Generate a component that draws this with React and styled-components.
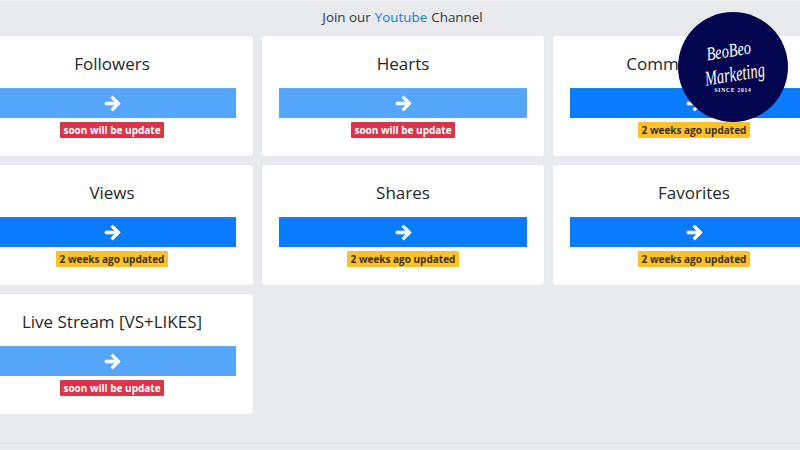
import React from 'react';
import styled, { createGlobalStyle } from 'styled-components';
import { FaArrowRight } from 'react-icons/fa';

const GlobalStyle = createGlobalStyle`
    html, body {
        margin: 0;
        padding: 0;
        background: #e9eaee;
    }
    body {
        font-family: "Open Sans", "Noto Sans", sans-serif;
        color: #212529;
    }
`;

const Page = styled.div`
    position: relative;
    width: 800px;
    height: 450px;
    overflow: hidden;
    box-sizing: border-box;
    background: #e9eaee;
    border-top: 1px solid #f1f1f4;
`;

const Header = styled.div`
    height: 31px;
    padding-bottom: 4px;
    padding-left: 5px;
    display: flex;
    align-items: center;
    justify-content: center;
    font-size: 13.4px;
    color: #33373b;
    a {
        color: #1c7cc7;
        text-decoration: none;
        margin: 0 4px;
    }
`;

const Grid = styled.div`
    display: grid;
    grid-template-columns: repeat(3, 282px);
    grid-auto-rows: 120px;
    gap: 9px;
    margin-left: -29px;
`;

const Card = styled.div`
    background: #fff;
    border-radius: 3px;
    padding: 0 17px;
    display: flex;
    flex-direction: column;
    align-items: center;
    box-shadow: 0 0 1px rgba(0, 0, 0, 0.08);
`;

const Title = styled.div`
    height: 52px;
    padding-top: 3px;
    box-sizing: border-box;
    display: flex;
    align-items: center;
    font-size: 17px;
    font-weight: 400;
    color: #23272b;
`;

const GoButton = styled.div`
    width: 100%;
    height: 30px;
    flex-shrink: 0;
    display: flex;
    align-items: center;
    justify-content: center;
    color: #fff;
    background: ${({ $soon }) => ($soon ? '#55a6fb' : '#0a7bfd')};
    border-top: 1px solid ${({ $soon }) => ($soon ? '#62acf5' : '#1a85e8')};
    box-sizing: border-box;
    svg {
        stroke: #fff;
        stroke-width: 30px;
    }
`;

const Badge = styled.span`
    margin-top: 4px;
    height: 16px;
    padding: 0 3.5px;
    display: flex;
    align-items: center;
    font-size: 10px;
    font-weight: 700;
    border-radius: 1px;
    color: ${({ $soon }) => ($soon ? '#fff' : '#3a3220')};
    background: ${({ $soon }) => ($soon ? '#d8354a' : '#fcc02a')};
`;

const Logo = styled.div`
    position: absolute;
    left: 678px;
    top: 11px;
    width: 110px;
    height: 110px;
    box-sizing: border-box;
    padding-bottom: 2px;
    border-radius: 50%;
    background: #03064f;
    color: #fff;
    display: flex;
    flex-direction: column;
    align-items: center;
    justify-content: center;
`;

const LogoScript = styled.div`
    font-family: "Liberation Serif", serif;
    font-style: italic;
    white-space: nowrap;
    font-size: ${({ $large }) => ($large ? '21px' : '19px')};
    line-height: ${({ $large }) => ($large ? '25px' : '23px')};
    transform: rotate(-9deg) scaleX(${({ $large }) => ($large ? 0.69 : 0.76)});
    margin-left: ${({ $large }) => ($large ? '3px' : '-8px')};
`;

const LogoSince = styled.div`
    font-family: "Liberation Serif", serif;
    font-size: 5.5px;
    line-height: 7px;
    font-weight: 700;
    letter-spacing: 0.8px;
    margin-top: 0;
`;

const Footer = styled.div`
    position: absolute;
    left: 0;
    right: 0;
    top: 442px;
    border-top: 1px solid #e0e1e5;
`;

const services = [
    { name: 'Followers', soon: true },
    { name: 'Hearts', soon: true },
    { name: 'Comment Hearts', soon: false },
    { name: 'Views', soon: false },
    { name: 'Shares', soon: false },
    { name: 'Favorites', soon: false },
    { name: 'Live Stream [VS+LIKES]', soon: true },
];

const App = () => (
    <Page>
        <GlobalStyle />
        <Header>
            Join our <a href="#youtube">Youtube</a> Channel
        </Header>
        <Grid>
            {services.map(({ name, soon }) => (
                <Card key={name}>
                    <Title>{name}</Title>
                    <GoButton $soon={soon}>
                        <FaArrowRight size={17} />
                    </GoButton>
                    <Badge $soon={soon}>
                        {soon ? 'soon will be update' : '2 weeks ago updated'}
                    </Badge>
                </Card>
            ))}
        </Grid>
        <Footer />
        <Logo>
            <LogoScript>BeoBeo</LogoScript>
            <LogoScript $large>Marketing</LogoScript>
            <LogoSince>SINCE 2014</LogoSince>
        </Logo>
    </Page>
);

export default App;
